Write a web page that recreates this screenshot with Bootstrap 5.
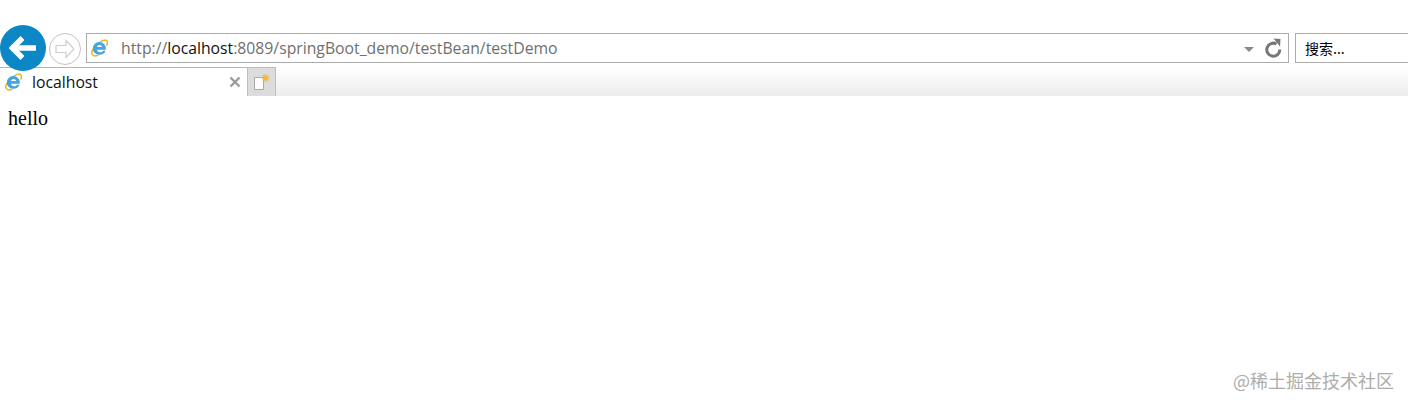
<!DOCTYPE html>
<html lang="zh-CN">
<head>
  <meta charset="UTF-8" />
  <meta name="viewport" content="width=device-width, initial-scale=1.0" />
  <title>localhost</title>
  <link href="https://cdn.jsdelivr.net/npm/bootstrap@5.3.3/dist/css/bootstrap.min.css" rel="stylesheet" />
  <style>
    html, body { height: 404px; overflow: hidden; }
    body { background: #fff; position: relative; font-family: "Open Sans", "Noto Sans CJK SC", sans-serif; color: #000; }

    .ie-toolbar { height: 67px; padding-top: 25px; }
    .ie-back { width: 46px; height: 46px; border-radius: 50%; background: #0a87c4; flex: none; position: relative; z-index: 2; }
    .ie-forward { width: 32px; height: 32px; border: 1px solid #c4c4c4; border-radius: 50%; margin: 8px 0 0 3px; flex: none; }
    .ie-address { height: 30px; width: 1203px; margin: 8px 0 0 5px; border: 1px solid #ababab; padding-left: 3px; flex: none; }
    .ie-url { margin-left: 13px; font-size: 15.75px; color: #707070; line-height: 28px; white-space: nowrap; }
    .ie-url b { font-weight: 400; color: #111; }
    .ie-caret { width: 0; height: 0; border: 5px solid transparent; border-top: 5px solid #8a8a8a; border-bottom: 0; margin-right: 10px; margin-top: 2px; }
    .ie-refresh { margin-right: 6px; }
    .ie-search { height: 30px; margin: 8px 0 0 6px; border: 1px solid #ababab; border-right: 0; padding-left: 9px; font-size: 14px; line-height: 28px; flex: 1 1 0; font-family: "Noto Sans CJK SC", sans-serif; }

    .ie-tabs { height: 29px; background: linear-gradient(to bottom, #fff, #ececec); }
    .ie-tab { width: 247px; height: 29px; background: #fff; border-top: 1px solid #b4b4b4; padding-left: 4px; font-size: 15.75px; line-height: 27px; flex: none; }
    .ie-tab-label { margin-left: 10px; color: #111; }
    .ie-close { margin-right: 6px; }
    .ie-newtab { width: 29px; height: 29px; background: #dcdcdc; border: 1px solid #bdbdbd; border-bottom: 0; flex: none; }

    .page-text { font-family: "Liberation Serif", serif; font-size: 20px; line-height: 23px; margin: 11px 0 0 8px; }
    .watermark { position: absolute; right: 14px; top: 367px; font-size: 18px; line-height: 26px; color: #adadad; font-family: "Noto Sans CJK SC", sans-serif; white-space: nowrap; }
  </style>
</head>
<body>

<div class="ie-toolbar d-flex">
  <div class="ie-back d-flex align-items-center justify-content-center">
    <svg width="28" height="26" viewBox="0 0 28 26"><path d="M13.500 3 3.500 13l10 10M5 13h22" fill="none" stroke="#fff" stroke-width="5.500"/></svg>
  </div>
  <div class="ie-forward d-flex align-items-center justify-content-center">
    <svg width="22" height="20" viewBox="0 0 22 20"><path d="M12 1.500 20 10 12 18.500V13.500H2V6.500H12Z" fill="none" stroke="#cdcdcd" stroke-width="1.200"/></svg>
  </div>
  <div class="ie-address d-flex align-items-center">
    <svg width="18" height="18" viewBox="0 0 18 18">
      <path d="M2.500 15.500C-0.500 13 8 2 15 1c3 0 3 3 1.500 5.500M2.500 15.500c1 2 4 1.500 6 0.500" fill="none" stroke="#e8b830" stroke-width="1.600"/>
      <path d="M2.800 9.500a6.500 6.300 0 0 1 13-0.300l-0.100 1.500H7c0.400 3 4.800 3.300 6 1h2.700C13.700 17.500 2.800 17 2.800 9.500ZM7 8h5.200C11.700 5.200 7.500 5.200 7 8Z" fill="#45a5e0" fill-rule="evenodd"/>
    </svg>
    <span class="ie-url flex-grow-1">http://<b>localhost</b>:8089/springBoot_demo/testBean/testDemo</span>
    <span class="ie-caret"></span>
    <svg class="ie-refresh" width="18" height="20" viewBox="0 0 18 20"><path d="M12.500 6A6.500 6.500 0 1 0 15.800 11.500" fill="none" stroke="#777" stroke-width="3"/><path d="M9.500 0.500 16.500 1 16 8.500Z" fill="#777"/></svg>
  </div>
  <div class="ie-search">搜索...</div>
</div>

<div class="ie-tabs d-flex">
  <div class="ie-tab d-flex align-items-center">
    <svg width="18" height="18" viewBox="0 0 18 18">
      <path d="M2.500 15.500C-0.500 13 8 2 15 1c3 0 3 3 1.500 5.500M2.500 15.500c1 2 4 1.500 6 0.500" fill="none" stroke="#e8b830" stroke-width="1.600"/>
      <path d="M2.800 9.500a6.500 6.300 0 0 1 13-0.300l-0.100 1.500H7c0.400 3 4.800 3.300 6 1h2.700C13.700 17.500 2.800 17 2.800 9.500ZM7 8h5.200C11.700 5.200 7.500 5.200 7 8Z" fill="#45a5e0" fill-rule="evenodd"/>
    </svg>
    <span class="ie-tab-label flex-grow-1">localhost</span>
    <svg class="ie-close" width="12" height="12" viewBox="0 0 12 12"><path d="M1.500 1.500l9 9M10.500 1.500l-9 9" stroke="#9a9a9a" stroke-width="2.400"/></svg>
  </div>
  <div class="ie-newtab d-flex align-items-center justify-content-center">
    <svg width="18" height="18" viewBox="0 0 18 18"><path d="M1.500 4.500h6l3 0v12h-9Z" fill="#fff" stroke="#a8a8a8"/><path d="M12.500 1v8M8.500 5h8M9.700 2.200l5.600 5.600M15.300 2.200l-5.600 5.600" stroke="#f3b83c" stroke-width="1.300"/></svg>
  </div>
</div>

<p class="page-text">hello</p>

<div class="watermark">@稀土掘金技术社区</div>

</body>
</html>
